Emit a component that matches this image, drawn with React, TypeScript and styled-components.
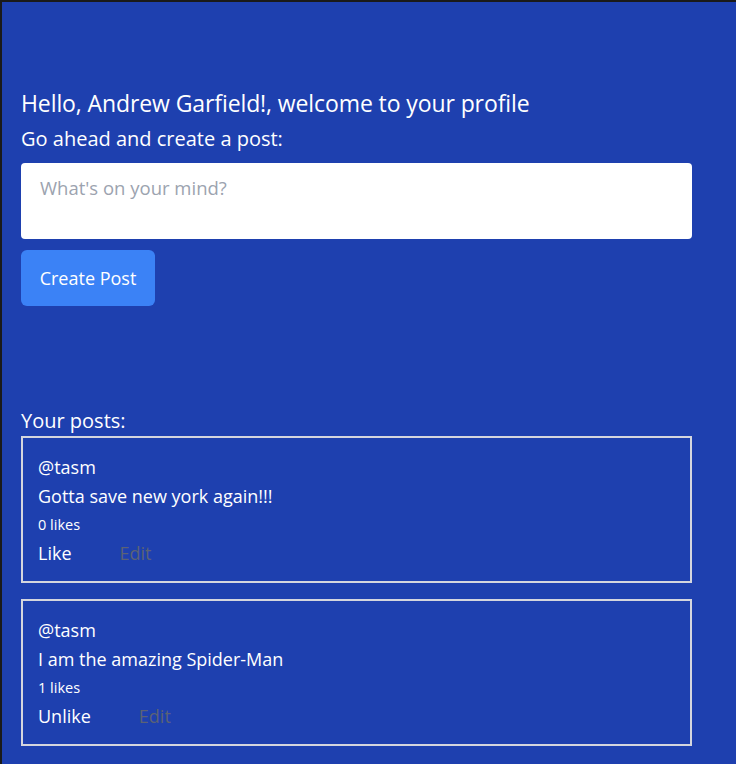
import React from "react";
import styled, { createGlobalStyle } from "styled-components";

const Global = createGlobalStyle`
  html, body { margin: 0; padding: 0; background: #1e40af; }
  body { font-family: "Open Sans", "Noto Sans", sans-serif; color: #fff; }
  * { box-sizing: border-box; }
`;

const Page = styled.div`
  min-height: 764px;
  background: #1e40af;
  border-top: 2px solid #1a1a1a;
  border-left: 2px solid #1a1a1a;
  padding: 87px 44px 20px 19px;
  display: flex;
  flex-direction: column;
`;

const Greeting = styled.h1`
  margin: 0;
  font-size: 23px;
  font-weight: 400;
  line-height: 28px;
  letter-spacing: -0.1px;
`;

const Label = styled.p`
  margin: 8px 0 0;
  font-size: 20px;
  line-height: 28px;
`;

const TextArea = styled.textarea`
  margin-top: 10px;
  width: 100%;
  height: 76px;
  border: none;
  border-radius: 4px;
  padding: 12px 19px;
  font-family: inherit;
  font-size: 18.5px;
  resize: none;
  outline: none;
  &::placeholder { color: #9ca3af; }
`;

const Button = styled.button`
  margin-top: 11px;
  align-self: flex-start;
  width: 134px;
  height: 56px;
  border: none;
  border-radius: 6px;
  background: #3b82f6;
  color: #fff;
  font-family: inherit;
  font-size: 18px;
`;

const SectionTitle = styled.h2`
  margin: 101px 0 1px;
  font-size: 20px;
  font-weight: 400;
  line-height: 28px;
`;

const PostList = styled.div`
  display: flex;
  flex-direction: column;
  gap: 16px;
`;

const Card = styled.div`
  border: 2px solid #d4d6de;
  padding: 17px 15px 16px;
  display: flex;
  flex-direction: column;
`;

const Handle = styled.div`
  font-size: 18px;
  line-height: 24px;
`;

const Body = styled.div`
  margin-top: 5px;
  font-size: 18px;
  line-height: 24px;
`;

const Likes = styled.div`
  margin-top: 7px;
  font-size: 14.5px;
  line-height: 20px;
`;

const Actions = styled.div`
  margin-top: 6px;
  display: flex;
  gap: 48px;
`;

const Action = styled.button<{ $muted?: boolean }>`
  background: none;
  border: none;
  padding: 0;
  font-family: inherit;
  font-size: 18px;
  line-height: 24px;
  color: ${(p) => (p.$muted ? "#5b6275" : "#fff")};
`;

const posts = [
  { text: "Gotta save new york again!!!", likes: 0, liked: false },
  { text: "I am the amazing Spider-Man", likes: 1, liked: true },
];

export default function App() {
  return (
    <Page>
      <Global />
      <Greeting>Hello, Andrew Garfield!, welcome to your profile</Greeting>
      <Label>Go ahead and create a post:</Label>
      <TextArea placeholder="What's on your mind?" />
      <Button>Create Post</Button>
      <SectionTitle>Your posts:</SectionTitle>
      <PostList>
        {posts.map((p, i) => (
          <Card key={i}>
            <Handle>@tasm</Handle>
            <Body>{p.text}</Body>
            <Likes>{p.likes} likes</Likes>
            <Actions>
              <Action>{p.liked ? "Unlike" : "Like"}</Action>
              <Action $muted>Edit</Action>
            </Actions>
          </Card>
        ))}
      </PostList>
    </Page>
  );
}
